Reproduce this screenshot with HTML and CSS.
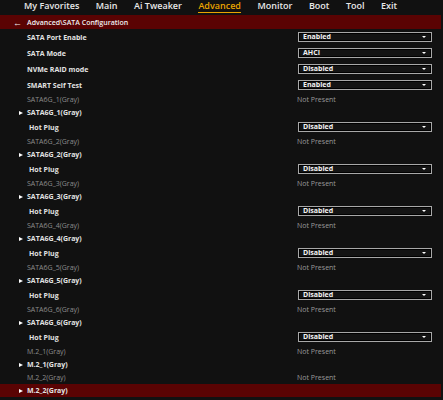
FILE: index.html
```html
<!DOCTYPE html>
<html lang="en">
<head>
  <meta charset="UTF-8" />
  <title>Advanced\SATA Configuration</title>
  <link rel="stylesheet" href="styles.css">
</head>
<body>

<div id="tabBar">
  <span class="tab">My Favorites</span>
  <span class="tab">Main</span>
  <span class="tab">Ai Tweaker</span>
  <span class="tab active">Advanced</span>
  <span class="tab">Monitor</span>
  <span class="tab">Boot</span>
  <span class="tab">Tool</span>
  <span class="tab">Exit</span>
</div>

<div id="crumb">
  <span class="back">&#8592;</span>
  <span>Advanced\SATA Configuration</span>
</div>

<div id="list">
  <div class="row tall">
    <span class="label">SATA Port Enable</span>
    <div class="select">Enabled<span class="caret"></span></div>
  </div>
  <div class="row tall">
    <span class="label">SATA Mode</span>
    <div class="select">AHCI<span class="caret"></span></div>
  </div>
  <div class="row tall">
    <span class="label">NVMe RAID mode</span>
    <div class="select">Disabled<span class="caret"></span></div>
  </div>
  <div class="row tall">
    <span class="label">SMART Self Test</span>
    <div class="select">Enabled<span class="caret"></span></div>
  </div>

  <div class="row">
    <span class="label dim">SATA6G_1(Gray)</span>
    <span class="value">Not Present</span>
  </div>
  <div class="row">
    <span class="label sub">SATA6G_1(Gray)</span>
  </div>
  <div class="row tall">
    <span class="label plug">Hot Plug</span>
    <div class="select">Disabled<span class="caret"></span></div>
  </div>

  <div class="row">
    <span class="label dim">SATA6G_2(Gray)</span>
    <span class="value">Not Present</span>
  </div>
  <div class="row">
    <span class="label sub">SATA6G_2(Gray)</span>
  </div>
  <div class="row tall">
    <span class="label plug">Hot Plug</span>
    <div class="select">Disabled<span class="caret"></span></div>
  </div>

  <div class="row">
    <span class="label dim">SATA6G_3(Gray)</span>
    <span class="value">Not Present</span>
  </div>
  <div class="row">
    <span class="label sub">SATA6G_3(Gray)</span>
  </div>
  <div class="row tall">
    <span class="label plug">Hot Plug</span>
    <div class="select">Disabled<span class="caret"></span></div>
  </div>

  <div class="row">
    <span class="label dim">SATA6G_4(Gray)</span>
    <span class="value">Not Present</span>
  </div>
  <div class="row">
    <span class="label sub">SATA6G_4(Gray)</span>
  </div>
  <div class="row tall">
    <span class="label plug">Hot Plug</span>
    <div class="select">Disabled<span class="caret"></span></div>
  </div>

  <div class="row">
    <span class="label dim">SATA6G_5(Gray)</span>
    <span class="value">Not Present</span>
  </div>
  <div class="row">
    <span class="label sub">SATA6G_5(Gray)</span>
  </div>
  <div class="row tall">
    <span class="label plug">Hot Plug</span>
    <div class="select">Disabled<span class="caret"></span></div>
  </div>

  <div class="row">
    <span class="label dim">SATA6G_6(Gray)</span>
    <span class="value">Not Present</span>
  </div>
  <div class="row">
    <span class="label sub">SATA6G_6(Gray)</span>
  </div>
  <div class="row tall">
    <span class="label plug">Hot Plug</span>
    <div class="select">Disabled<span class="caret"></span></div>
  </div>

  <div class="row">
    <span class="label dim">M.2_1(Gray)</span>
    <span class="value">Not Present</span>
  </div>
  <div class="row">
    <span class="label sub">M.2_1(Gray)</span>
  </div>
  <div class="row">
    <span class="label dim">M.2_2(Gray)</span>
    <span class="value">Not Present</span>
  </div>
  <div class="row selected">
    <span class="label sub">M.2_2(Gray)</span>
  </div>
</div>

</body>
</html>
```

FILE: styles.css
```css
body, html {
  margin: 0;
  height: 100%;
  background: #111111;
  color: #e6e6e6;
  font-family: "Open Sans", "Liberation Sans", sans-serif;
  overflow: hidden;
}

#tabBar {
  display: flex;
  height: 15px;
  align-items: flex-start;
  padding-left: 24px;
  gap: 16.5px;
  font-size: 9px;
  font-weight: 600;
  line-height: 11px;
}

.tab {
  color: #e8e8e8;
  white-space: nowrap;
}

.tab.active {
  color: #e9a400;
  border-bottom: 1px solid #e9a400;
  height: 12px;
}

#crumb {
  display: flex;
  align-items: center;
  height: 14px;
  width: 441px;
  background: #5a0303;
  font-size: 7px;
  font-weight: 600;
  color: #f0f0f0;
}

.back {
  width: 27px;
  padding-left: 13px;
  box-sizing: border-box;
  font-size: 9px;
}

#list {
  display: flex;
  flex-direction: column;
}

.row {
  display: flex;
  align-items: center;
  height: 13px;
  width: 441px;
  font-size: 7px;
  position: relative;
}

.row.tall {
  height: 16px;
}

.row.selected {
  background: #5a0303;
}

.label {
  width: 270px;
  padding-left: 27px;
  font-weight: 700;
  color: #e2e2e2;
  white-space: nowrap;
}

.label.dim {
  font-weight: 400;
  color: #8c8c8c;
}

.label.plug {
  padding-left: 29px;
  width: 268px;
}

.label.sub::before {
  content: "";
  position: absolute;
  left: 19px;
  top: 50%;
  margin-top: -2px;
  border-left: 4px solid #ffffff;
  border-top: 2px solid transparent;
  border-bottom: 2px solid transparent;
}

.value {
  color: #9a9a9a;
}

.select {
  box-sizing: border-box;
  width: 134px;
  height: 10px;
  margin-left: 1px;
  border: 1px solid #a8a8a8;
  box-shadow: inset 0 0 0 1px #000000;
  background: #141414;
  color: #f2f2f2;
  font-weight: 700;
  font-size: 7px;
  line-height: 8px;
  padding-left: 4px;
  position: relative;
}

.caret {
  position: absolute;
  right: 5px;
  top: 3px;
  border-top: 2px solid #ffffff;
  border-left: 2px solid transparent;
  border-right: 2px solid transparent;
}
```
